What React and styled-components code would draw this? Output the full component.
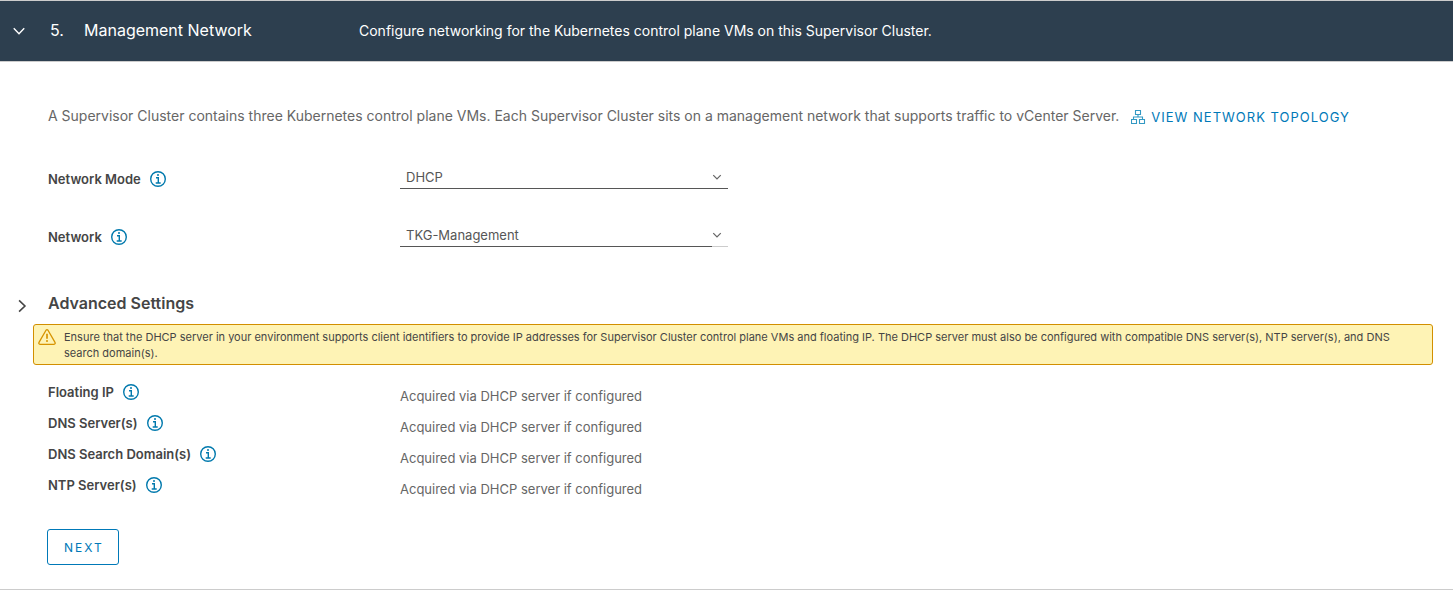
import React from "react";
import styled, { createGlobalStyle } from "styled-components";

const GlobalStyle = createGlobalStyle`
  * { box-sizing: border-box; }
  body {
    margin: 0;
    background: #fff;
    color: #666;
    font-family: Inter, "Open Sans", sans-serif;
    font-size: 13px;
    line-height: 24px;
  }
  button, select { font: inherit; }
`;

const Panel = styled.section`
  border-top: 1px solid #ccc;
  border-bottom: 1px solid #ccc;
`;

const StepHeader = styled.button`
  display: grid;
  grid-template-columns: 38px 34px 275px 1fr;
  align-items: center;
  width: 100%;
  height: 61px;
  padding: 0 12px;
  border: 0;
  border-bottom: 1px solid #ccc;
  background: #2d3f4f;
  color: #fff;
  text-align: left;
`;

const StepTitle = styled.span`
  padding-bottom: 2px;
  font-size: 16px;
`;

const StepSummary = styled.span`
  font-size: 14px;
`;

const Content = styled.div`
  padding: 42px 20px 24px 33px;
`;

const Intro = styled.p`
  margin: 0 0 34px;
  padding-left: 15px;
  font-size: 14px;
`;

const TopologyLink = styled.a`
  display: inline-flex;
  align-items: center;
  gap: 5px;
  height: 24px;
  margin-left: 8px;
  padding-top: 2px;
  color: #0079b8;
  font-size: 13px;
  letter-spacing: 1px;
  text-decoration: none;
  vertical-align: top;
`;

const FieldRow = styled.div`
  display: grid;
  grid-template-columns: 352px 328px;
  align-items: center;
  height: 34px;
  margin-bottom: 24px;
  padding-left: 15px;
`;

const LabelGroup = styled.div`
  display: flex;
  align-items: center;
  gap: 9px;
  color: #454545;
  font-weight: 600;
`;

const InfoButton = styled.button`
  display: flex;
  padding: 0;
  border: 0;
  background: none;
  color: #0079ad;
`;

const SelectBox = styled.div`
  position: relative;
  height: 24px;
  margin-bottom: 4px;
  border-bottom: 1px solid #ccc;

  svg {
    position: absolute;
    top: 7px;
    right: 6px;
    pointer-events: none;
  }
`;

const Select = styled.select`
  display: block;
  width: ${(p) => (p.$inset ? "calc(100% - 16px)" : "100%")};
  height: 24px;
  padding: 0 6px 2px;
  border: 0;
  border-bottom: 1px solid #565656;
  border-radius: 0;
  background: transparent;
  color: #565656;
  appearance: none;
`;

const AdvancedToggle = styled.button`
  display: flex;
  align-items: center;
  margin: 37px 0 9px -18px;
  padding: 0;
  border: 0;
  background: none;
  color: #454545;
  font-size: 16px;
  font-weight: 600;
  line-height: 24px;

  svg {
    margin: 5px 19px 0 0;
  }
`;

const Warning = styled.div`
  display: flex;
  gap: 8px;
  padding: 4px 24px 3px 4px;
  border: 1px solid #d28f00;
  border-radius: 3px;
  background: #fef3b5;
  color: #454545;
  font-size: 11px;
  line-height: 16px;

  svg {
    flex: none;
  }
`;

const Settings = styled.dl`
  margin: 12px 0 28px;
  padding-left: 15px;
`;

const Setting = styled.div`
  display: grid;
  grid-template-columns: 352px 1fr;
  height: 31px;

  dt {
    padding-top: 3px;
  }
  dd {
    margin: 0;
    padding-top: 7px;
  }
`;

const NextButton = styled.button`
  display: block;
  height: 36px;
  margin-left: 14px;
  padding: 1px 14px 0 16px;
  border: 1px solid #0079b8;
  border-radius: 3px;
  background: #fff;
  color: #0079b8;
  font-size: 12px;
  letter-spacing: 2px;
`;

const Chevron = ({ size = 12, right = false, width = 2 }) => (
  <svg width={size} height={size} viewBox="0 0 12 12" fill="none" stroke="currentColor" strokeWidth={width} aria-hidden="true">
    <path d={right ? "M3.5 1.2 8.5 6l-5 4.8" : "M1.5 3.7 6 8.3l4.5-4.6"} />
  </svg>
);

const InfoIcon = () => (
  <svg width="16" height="16" viewBox="0 0 16 16" fill="none" stroke="currentColor" aria-hidden="true">
    <circle cx="8" cy="8" r="7.3" strokeWidth="1.4" />
    <path d="M6 6.8h2.3v5M5.7 12h5" strokeWidth="1.4" />
    <circle cx="8" cy="4.1" r="1" fill="currentColor" stroke="none" />
  </svg>
);

const TopologyIcon = () => (
  <svg width="15" height="15" viewBox="0 0 15 15" fill="none" stroke="#3399c4" aria-hidden="true">
    <path d="M4.5.5h5v4h-5zM.5 9.5h5v4h-5zM8.5 9.5h5v4h-5zM7 4.5v2.5M2.5 9.5V7h9v2.5" strokeWidth="1.1" />
  </svg>
);

const WarningIcon = () => (
  <svg width="18" height="16" viewBox="0 0 18 16" fill="none" stroke="#d69300" aria-hidden="true">
    <path d="M8 1.2Q9 .1 10 1.2L17 13.4Q17.6 15.2 16 15.3H2Q.4 15.2 1 13.4Z" strokeWidth="1.3" strokeLinejoin="round" />
    <path d="M9 4.7v5" strokeWidth="1.7" />
    <circle cx="9" cy="12" r="1" fill="#d69300" stroke="none" />
  </svg>
);

const Info = ({ about }) => (
  <InfoButton type="button" aria-label={`About ${about}`}>
    <InfoIcon />
  </InfoButton>
);

const SelectField = ({ id, label, value, inset }) => (
  <FieldRow>
    <LabelGroup>
      <label htmlFor={id}>{label}</label>
      <Info about={label} />
    </LabelGroup>
    <SelectBox>
      <Select id={id} $inset={inset} defaultValue={value}>
        <option>{value}</option>
      </Select>
      <Chevron size={10} width={1.5} />
    </SelectBox>
  </FieldRow>
);

const settings = ["Floating IP", "DNS Server(s)", "DNS Search Domain(s)", "NTP Server(s)"];

export default function App() {
  return (
    <>
      <GlobalStyle />
      <Panel>
        <StepHeader type="button" aria-expanded="true">
          <Chevron size={14} width={1.2} />
          <StepTitle>5.</StepTitle>
          <StepTitle>Management Network</StepTitle>
          <StepSummary>Configure networking for the Kubernetes control plane VMs on this Supervisor Cluster.</StepSummary>
        </StepHeader>
        <Content>
          <Intro>
            A Supervisor Cluster contains three Kubernetes control plane VMs. Each Supervisor Cluster sits on a
            management network that supports traffic to vCenter Server.{" "}
            <TopologyLink href="#topology">
              <TopologyIcon />
              VIEW NETWORK TOPOLOGY
            </TopologyLink>
          </Intro>
          <SelectField id="network-mode" label="Network Mode" value="DHCP" />
          <SelectField id="network" label="Network" value="TKG-Management" inset />
          <AdvancedToggle type="button" aria-expanded="false">
            <Chevron size={14} right width={1.4} />
            Advanced Settings
          </AdvancedToggle>
          <Warning role="note">
            <WarningIcon />
            <span>
              Ensure that the DHCP server in your environment supports client identifiers to provide IP addresses for
              Supervisor Cluster control plane VMs and floating IP. The DHCP server must also be configured with
              compatible DNS server(s), NTP server(s), and DNS search domain(s).
            </span>
          </Warning>
          <Settings>
            {settings.map((name) => (
              <Setting key={name}>
                <dt>
                  <LabelGroup>
                    {name}
                    <Info about={name} />
                  </LabelGroup>
                </dt>
                <dd>Acquired via DHCP server if configured</dd>
              </Setting>
            ))}
          </Settings>
          <NextButton type="button">NEXT</NextButton>
        </Content>
      </Panel>
    </>
  );
}
